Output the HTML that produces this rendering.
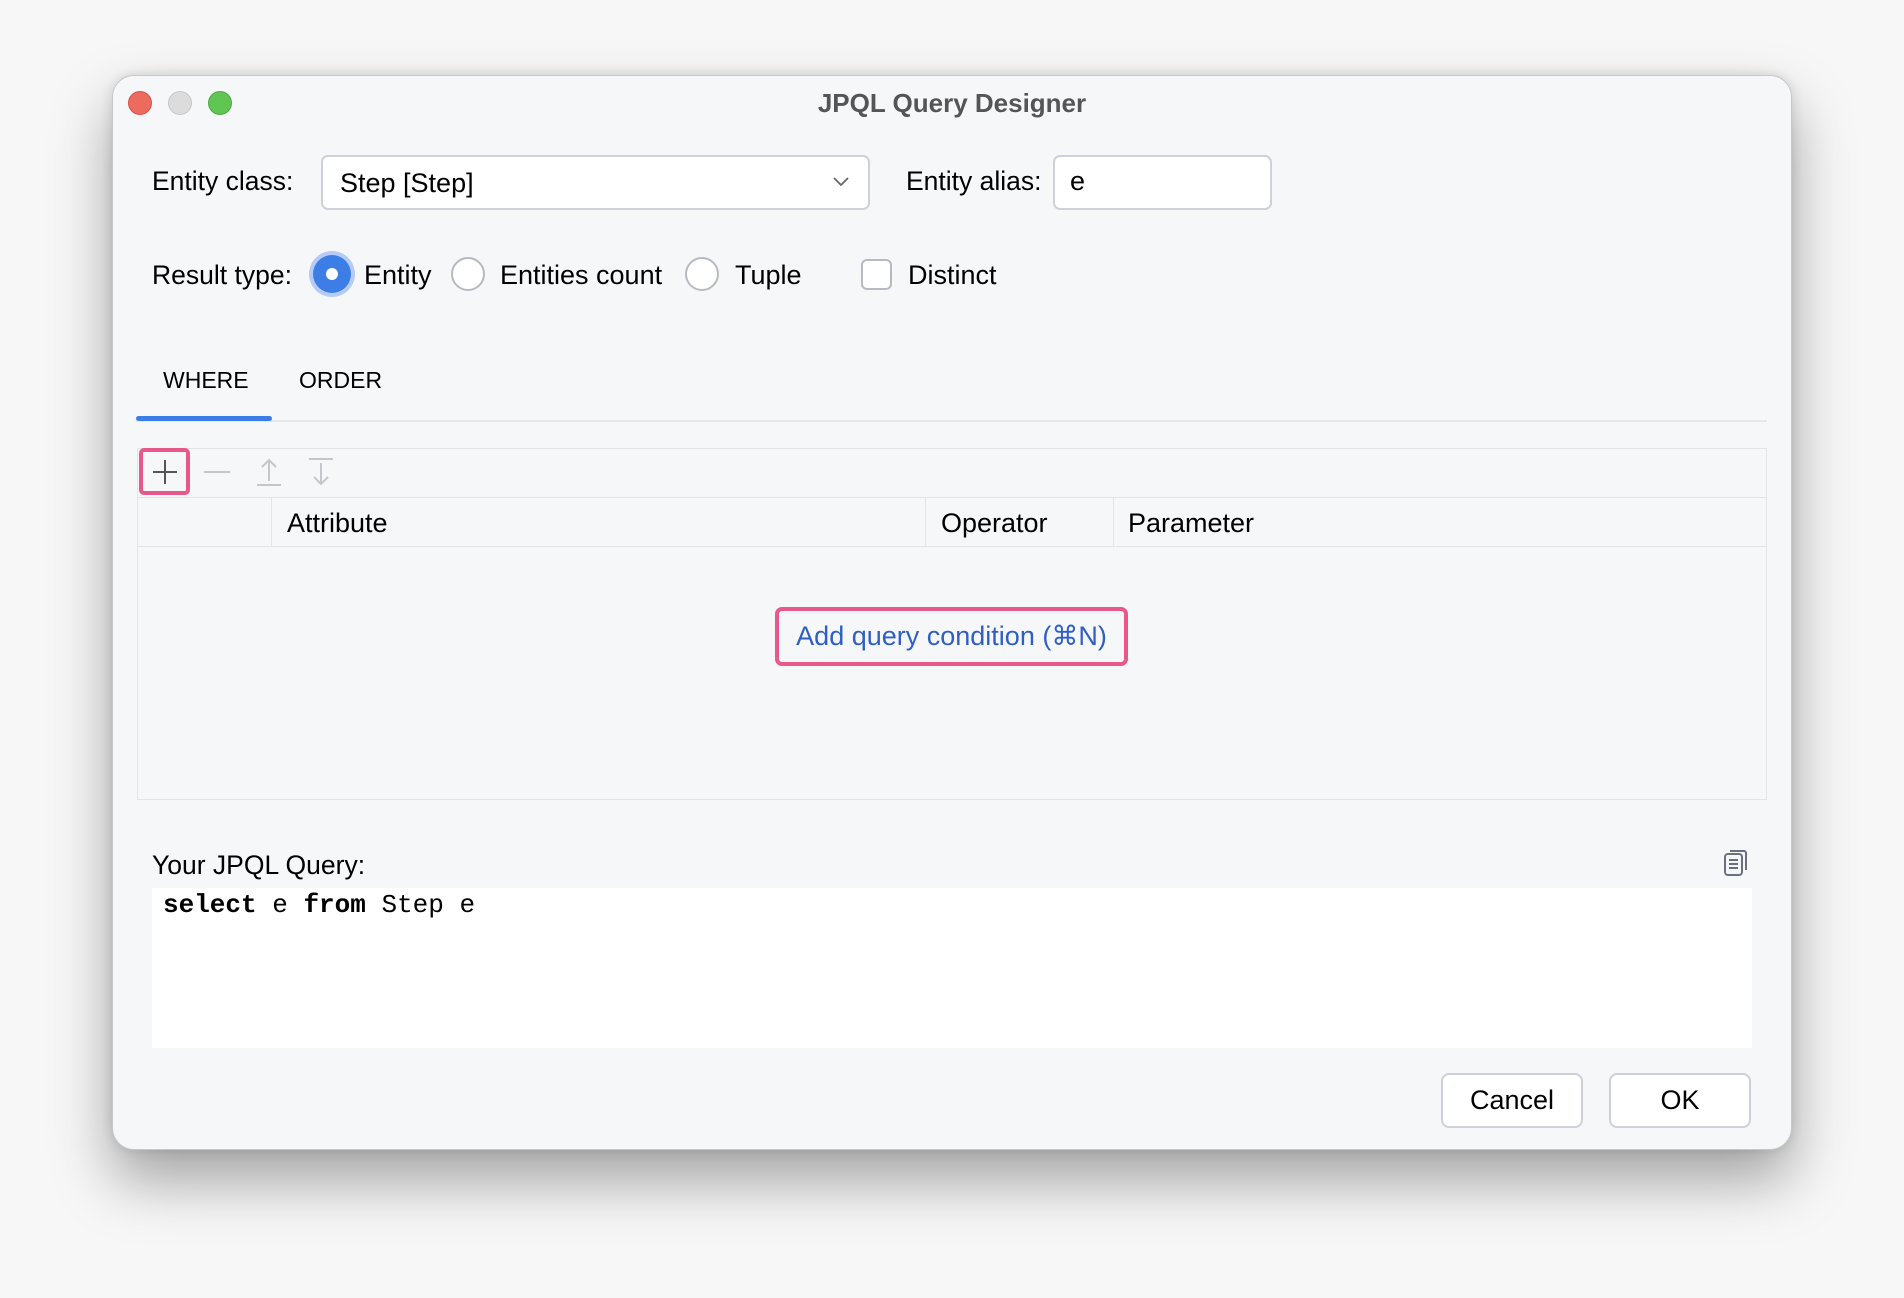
<!DOCTYPE html>
<html><head><meta charset="utf-8"><style>
*{box-sizing:border-box;margin:0;padding:0}
body{width:1904px;height:1298px;background:#f7f7f7;position:relative;overflow:hidden;font-family:"Liberation Sans",sans-serif;color:#000}
.a{position:absolute}
.win{left:112px;top:75px;width:1680px;height:1075px;background:#f6f7f9;border-radius:22px;border:1px solid #c8c8c8;box-shadow:0 30px 60px rgba(0,0,0,.35),0 0 12px rgba(0,0,0,.12)}
.t{font-size:26.5px;line-height:30px;white-space:nowrap}
.dot{width:24px;height:24px;border-radius:50%;top:91px}
.fld{background:#fff;border:2px solid #cfd1d8;border-radius:7px}
.radio{width:34px;height:34px;border-radius:50%;border:2px solid #b8bac2;background:#fff;top:257px}
.btn{background:#fff;border:2px solid #cfd1d8;border-radius:8px;top:1073px;height:55px;width:142px;font-size:26px;line-height:51px;text-align:center}
.vl{width:1px;background:#e3e4e8;top:498px;height:48px}
</style></head><body>
<div class="a win"></div>
<div class="a dot" style="left:128px;background:#ec6a5e;border:1px solid #d25448"></div>
<div class="a dot" style="left:168px;background:#dcdcdc;border:1px solid #c8c8c8"></div>
<div class="a dot" style="left:208px;background:#61c554;border:1px solid #4da942"></div>
<div class="a t" style="left:0;width:1904px;text-align:center;top:88px;font-weight:bold;color:#555;font-size:26px">JPQL Query Designer</div>

<div class="a t" style="left:152px;top:166px">Entity class:</div>
<div class="a fld" style="left:321px;top:155px;width:549px;height:55px"></div>
<div class="a t" style="left:340px;top:168px;font-size:27px">Step [Step]</div>
<svg class="a" style="left:832px;top:176px" width="18" height="12"><path d="M2 2 L9 9 L16 2" fill="none" stroke="#666" stroke-width="1.8"/></svg>
<div class="a t" style="left:906px;top:166px">Entity alias:</div>
<div class="a fld" style="left:1053px;top:155px;width:219px;height:55px"></div>
<div class="a t" style="left:1070px;top:166px;font-size:27px">e</div>

<div class="a t" style="left:152px;top:260px">Result type:</div>
<div class="a" style="left:309px;top:251px;width:46px;height:46px;border-radius:50%;background:#b5cdf6"></div>
<div class="a" style="left:313px;top:255px;width:38px;height:38px;border-radius:50%;background:#3d7ee6"></div>
<div class="a" style="left:326px;top:268px;width:12px;height:12px;border-radius:50%;background:#fff"></div>
<div class="a t" style="left:364px;top:260px;font-size:27px">Entity</div>
<div class="a radio" style="left:451px"></div>
<div class="a t" style="left:500px;top:260px;font-size:27px">Entities count</div>
<div class="a radio" style="left:685px"></div>
<div class="a t" style="left:735px;top:260px;font-size:27px">Tuple</div>
<div class="a" style="left:861px;top:259px;width:31px;height:31px;border:2px solid #b8bac2;border-radius:6px;background:#fff"></div>
<div class="a t" style="left:908px;top:260px;font-size:27px">Distinct</div>

<div class="a t" style="left:163px;top:365px;font-size:23px">WHERE</div>
<div class="a t" style="left:299px;top:365px;font-size:23px">ORDER</div>
<div class="a" style="left:136px;top:420px;width:1631px;height:2px;background:#e6e7eb"></div>
<div class="a" style="left:136px;top:416px;width:136px;height:5px;background:#3d7ee6;border-radius:3px"></div>

<div class="a" style="left:137px;top:448px;width:1630px;height:352px;border:1px solid #e3e4e8"></div>
<div class="a" style="left:137px;top:497px;width:1630px;height:1px;background:#e3e4e8"></div>
<div class="a" style="left:137px;top:546px;width:1630px;height:1px;background:#e3e4e8"></div>
<div class="a" style="left:139px;top:448px;width:51px;height:47px;border:4px solid #e8588a;border-radius:5px"></div>
<svg class="a" style="left:150px;top:457px" width="30" height="30"><path d="M15 3V27M3 15H27" stroke="#555" stroke-width="2"/></svg>
<svg class="a" style="left:202px;top:457px" width="30" height="30"><path d="M2 15H28" stroke="#c4c6cc" stroke-width="2"/></svg>
<svg class="a" style="left:254px;top:457px" width="30" height="30"><path d="M15 3V24M8 10L15 3L22 10M3 28H27" fill="none" stroke="#c4c6cc" stroke-width="2"/></svg>
<svg class="a" style="left:306px;top:457px" width="30" height="30"><path d="M15 6V27M8 20L15 27L22 20M3 2H27" fill="none" stroke="#c4c6cc" stroke-width="2"/></svg>
<div class="a vl" style="left:271px"></div>
<div class="a vl" style="left:925px"></div>
<div class="a vl" style="left:1113px"></div>
<div class="a t" style="left:287px;top:508px;font-size:27px">Attribute</div>
<div class="a t" style="left:941px;top:508px;font-size:27px">Operator</div>
<div class="a t" style="left:1128px;top:508px;font-size:27px">Parameter</div>

<div class="a" style="left:775px;top:607px;width:353px;height:59px;border:4px solid #e8588a;border-radius:7px"></div>
<div class="a t" style="left:775px;width:353px;text-align:center;top:621px;color:#2f5fc4;font-size:27px">Add query condition (⌘N)</div>

<div class="a t" style="left:152px;top:850px">Your JPQL Query:</div>
<svg class="a" style="left:1723px;top:849px" width="26" height="28"><rect x="2" y="5" width="17" height="21" rx="3" fill="none" stroke="#6c707e" stroke-width="2"/><path d="M7 2H21a2 2 0 0 1 2 2V21" fill="none" stroke="#6c707e" stroke-width="2"/><path d="M6 11H15M6 15H15M6 19H15" stroke="#6c707e" stroke-width="2"/></svg>
<div class="a" style="left:152px;top:888px;width:1600px;height:160px;background:#fff"></div>
<div class="a t" style="left:163px;top:890px;font-family:'Liberation Mono',monospace;font-size:26px"><b>select</b> e <b>from</b> Step e</div>

<div class="a btn" style="left:1441px;font-size:27px">Cancel</div>
<div class="a btn" style="left:1609px;font-size:27px">OK</div>
</body></html>
